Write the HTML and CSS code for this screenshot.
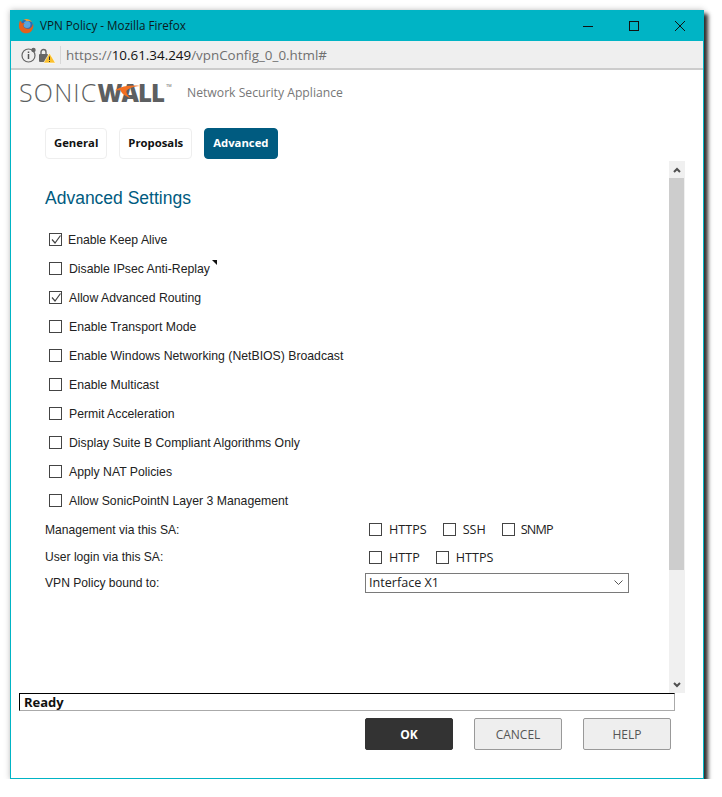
FILE: index.html
```html
<!DOCTYPE html>
<html lang="en">
<head>
    <meta charset="UTF-8">
    <title>VPN Policy - Mozilla Firefox</title>
    <link rel="stylesheet" href="styles.css">
</head>
<body>

<div class="window">

    <!-- Title bar -->
    <div class="titlebar">
        <svg class="ff-icon" width="16" height="16" viewBox="0 0 16 16">
            <circle cx="8.500" cy="7.500" r="6.300" fill="#2b6cb3"/>
            <circle cx="9" cy="6.500" r="3.500" fill="#5aa5dc"/>
            <path d="M2 2.500 C0.500 6 0.400 10.500 3 13.200 C5.500 15.900 10.500 16 13.300 13.200 C15.300 11.200 15.900 8 15 5.500 C14.700 7.800 13.600 9.600 11.800 10.400 C9.500 11.400 6.500 10.600 5.600 8.600 C5 7.200 5.600 5.800 6.800 5.200 C5.600 4.800 4.600 5.200 4 5.600 C3.800 4.400 3 3.300 2 2.500 Z" fill="#e2611d"/>
            <path d="M5.500 1.600 C8.500 0.200 12.300 1.300 14 4.200 C12.300 2.900 10 2.600 8.600 3.200 C7.800 2.400 6.500 1.800 5.500 1.600 Z" fill="#f3a02c"/>
        </svg>
        <span class="title-text">VPN Policy - Mozilla Firefox</span>
        <div class="win-controls">
            <svg width="12" height="12" viewBox="0 0 12 12"><path d="M1 6.500 H11" stroke="#111" fill="none"/></svg>
            <svg width="12" height="12" viewBox="0 0 12 12"><rect x="1.500" y="1.500" width="9" height="9" stroke="#111" fill="none"/></svg>
            <svg width="12" height="12" viewBox="0 0 12 12"><path d="M1 1 L11 11 M11 1 L1 11" stroke="#111" fill="none"/></svg>
        </div>
    </div>

    <!-- Address bar -->
    <div class="urlbar">
        <svg class="url-icons" width="35" height="18" viewBox="0 0 35 18">
            <circle cx="7.500" cy="9.500" r="6.500" stroke="#666" stroke-width="1.200" fill="none"/>
            <path d="M7.500 8 V13 M7.500 5.500 V7" stroke="#555" stroke-width="1.500"/>
            <circle cx="12.500" cy="4" r="2.200" fill="#666"/>
            <rect x="18" y="8" width="9" height="8" rx="1" fill="#666"/>
            <path d="M20 8 V6 A2.500 2.500 0 0 1 25 6 V8" stroke="#666" stroke-width="1.400" fill="none"/>
            <path d="M28.500 7 L34.500 17 H22.500 Z" fill="#fbc02d" stroke="#fff" stroke-width="0.600"/>
            <path d="M28.500 10.500 V14 M28.500 15 V16" stroke="#333" stroke-width="1"/>
        </svg>
        <span class="url-sep"></span>
        <span class="url">https://<span class="url-host">10.61.34.249</span>/vpnConfig_0_0.html#</span>
    </div>

    <!-- Product header -->
    <div class="brand">
        <div class="logo">
            <span class="logo-thin">SONIC</span><span class="logo-bold">WALL</span><span class="logo-tm">TM</span>
            <svg class="logo-swoosh" width="25" height="14" viewBox="0 0 22 16" preserveAspectRatio="none">
                <path d="M0 6 C6 1 14 0 22 1 C15 2 11 4 10 7 C10 10 12 13 14 15 C9 13 5 9 5 6 C3.500 6 2 6 0 6 Z" fill="#f36f21"/>
            </svg>
        </div>
        <span class="brand-text">Network Security Appliance</span>
    </div>

    <!-- Tabs -->
    <div class="tabs">
        <div class="tab">General</div>
        <div class="tab">Proposals</div>
        <div class="tab active">Advanced</div>
    </div>

    <div class="pane">
        <div class="settings">
            <h2>Advanced Settings</h2>

            <label class="check-row tight"><input type="checkbox" checked><span>Enable Keep Alive</span></label>
            <label class="check-row"><input type="checkbox"><span class="has-note">Disable IPsec Anti-Replay</span></label>
            <label class="check-row"><input type="checkbox" checked><span>Allow Advanced Routing</span></label>
            <label class="check-row"><input type="checkbox"><span>Enable Transport Mode</span></label>
            <label class="check-row"><input type="checkbox"><span>Enable Windows Networking (NetBIOS) Broadcast</span></label>
            <label class="check-row"><input type="checkbox"><span>Enable Multicast</span></label>
            <label class="check-row"><input type="checkbox"><span>Permit Acceleration</span></label>
            <label class="check-row"><input type="checkbox"><span>Display Suite B Compliant Algorithms Only</span></label>
            <label class="check-row"><input type="checkbox"><span>Apply NAT Policies</span></label>
            <label class="check-row"><input type="checkbox"><span>Allow SonicPointN Layer 3 Management</span></label>

            <div class="field-row">
                <span class="field-label">Management via this SA:</span>
                <div class="field-opts">
                    <label class="opt"><input type="checkbox"><span>HTTPS</span></label>
                    <label class="opt"><input type="checkbox"><span>SSH</span></label>
                    <label class="opt"><input type="checkbox"><span class="narrow">SNMP</span></label>
                </div>
            </div>
            <div class="field-row login-row">
                <span class="field-label">User login via this SA:</span>
                <div class="field-opts">
                    <label class="opt"><input type="checkbox"><span>HTTP</span></label>
                    <label class="opt"><input type="checkbox"><span>HTTPS</span></label>
                </div>
            </div>
            <div class="field-row bound-row">
                <span class="field-label">VPN Policy bound to:</span>
                <div class="select-box">
                    <span>Interface X1</span>
                    <svg width="9" height="5" viewBox="0 0 9 5"><path d="M0.500 0.500 L4.500 4.500 L8.500 0.500" stroke="#555" fill="none"/></svg>
                </div>
            </div>
        </div>

        <!-- Scrollbar -->
        <div class="scrollbar">
            <div class="scroll-btn">
                <svg width="8" height="6" viewBox="0 0 8 6"><path d="M1 5 L4 2 L7 5" stroke="#505050" stroke-width="2" fill="none"/></svg>
            </div>
            <div class="scroll-track"><div class="scroll-thumb"></div></div>
            <div class="scroll-btn">
                <svg width="8" height="6" viewBox="0 0 8 6"><path d="M1 1 L4 4 L7 1" stroke="#505050" stroke-width="2" fill="none"/></svg>
            </div>
        </div>
    </div>

    <!-- Status -->
    <div class="status"><span>Ready</span></div>

    <!-- Buttons -->
    <div class="actions">
        <button class="btn primary">OK</button>
        <button class="btn">CANCEL</button>
        <button class="btn">HELP</button>
    </div>
</div>

</body>
</html>
```

FILE: styles.css
```css
body {
    margin: 0;
    background: #fff;
    font-family: "Liberation Sans", Arial, sans-serif;
}
.window {
    width: 694px;
    height: 769px;
    margin: 10px 0 0 10px;
    box-sizing: border-box;
    border: 1px solid #00b4c5;
    border-top: none;
    background: #fff;
    display: flex;
    flex-direction: column;
    box-shadow: 4px 4px 4px rgba(0, 0, 0, 0.8), 0 0 6px rgba(0, 0, 0, 0.25);
}

/* title bar */
.titlebar {
    height: 31px;
    background: #00b4c5;
    display: flex;
    align-items: center;
    padding-left: 8px;
    margin: 0 -1px 0 -1px;
    flex: none;
}
.ff-icon {
    margin-right: 6px;
}
.title-text {
    margin-bottom: 2px;
    font-family: "Open Sans", sans-serif;
    font-size: 11.700px;
    color: #0b1a1c;
}
.win-controls {
    margin-left: auto;
    display: flex;
    gap: 34px;
    padding-right: 18px;
}

/* address bar */
.urlbar {
    height: 29px;
    flex: none;
    box-sizing: border-box;
    background: #efefef;
    border-bottom: 2px solid #ccc;
    display: flex;
    align-items: center;
    padding-left: 10px;
}
.url-icons {
    flex: none;
}
.url-sep {
    width: 1px;
    height: 18px;
    background: #d8d8d8;
    margin: 0 5px 0 4px;
}
.url {
    font-family: "Open Sans", sans-serif;
    font-size: 13.400px;
    color: #6f6f6f;
}
.url-host {
    color: #111;
}

/* logo row */
.brand {
    height: 44px;
    flex: none;
    display: flex;
    align-items: center;
    padding-left: 8px;
    box-sizing: border-box;
}
.logo {
    position: relative;
    width: 152px;
    margin-bottom: 6px;
    white-space: nowrap;
    color: #5d5f61;
    font-size: 25px;
    line-height: 30px;
}
.logo-thin {
    font-family: "Open Sans", sans-serif;
    font-weight: 300;
    letter-spacing: 1.200px;
}
.logo-bold {
    font-family: "Open Sans", sans-serif;
    font-weight: 800;
    font-size: 24px;
    letter-spacing: -1px;
}
.logo-tm {
    font-size: 4px;
    vertical-align: 15px;
    margin-left: 2px;
}
.logo-swoosh {
    position: absolute;
    left: 96px;
    top: 14px;
}
.brand-text {
    margin-left: 16px;
    font-family: "Open Sans", sans-serif;
    font-size: 12.200px;
    color: #777;
}

/* tabs */
.tabs {
    display: flex;
    gap: 12px;
    padding-left: 34px;
    margin-top: 14px;
    flex: none;
}
.tab {
    height: 31px;
    box-sizing: border-box;
    padding: 0 8px;
    border: 1px solid #eee;
    border-radius: 4px;
    font-family: "Open Sans", sans-serif;
    font-weight: 700;
    font-size: 11.300px;
    line-height: 28px;
    color: #111;
}
.tab.active {
    padding-right: 9px;
    background: #005b80;
    border-color: #005b80;
    color: #fff;
}

/* scrolling area */
.pane {
    display: flex;
    height: 532px;
    margin-top: 2px;
    flex: none;
}
.settings {
    width: 658px;
    box-sizing: border-box;
    padding-left: 34px;
}
h2 {
    margin: 0;
    padding-top: 26px;
    height: 64px;
    box-sizing: border-box;
    font-size: 17.500px;
    font-weight: normal;
    line-height: 22px;
    color: #005b80;
}
.check-row {
    display: flex;
    align-items: center;
    height: 29px;
    padding-left: 4px;
    font-size: 12.260px;
    color: #222;
}
.check-row.tight span {
    margin-left: -1px;
}
input[type="checkbox"] {
    appearance: none;
    width: 13px;
    height: 13px;
    margin: 0 7px 0 0;
    flex: none;
    border: 1px solid #444;
    background: #fff;
}
input[type="checkbox"]:checked {
    background: url("data:image/svg+xml,%3Csvg xmlns='http://www.w3.org/2000/svg' width='11' height='11'%3E%3Cpath d='M2 5.500 L5 9 L10.500 1.500' stroke='%23444' stroke-width='1.200' fill='none'/%3E%3C/svg%3E") no-repeat center;
}
.has-note {
    position: relative;
}
.has-note::after {
    content: "";
    position: absolute;
    right: -7px;
    top: -2px;
    border-top: 5px solid #111;
    border-left: 5px solid transparent;
}
.field-row {
    display: flex;
    align-items: center;
    height: 29px;
    font-size: 12.100px;
    color: #222;
}
.login-row {
    height: 26px;
}
.bound-row {
    height: 25px;
}
.field-label {
    width: 320px;
    flex: none;
}
.field-opts {
    display: flex;
    gap: 16px;
    padding-left: 4px;
}
.opt {
    display: flex;
    align-items: center;
    font-family: "Open Sans", sans-serif;
    font-size: 12.600px;
}
.narrow {
    margin-left: -1px;
    letter-spacing: -0.800px;
}
.select-box {
    width: 264px;
    height: 20px;
    box-sizing: border-box;
    border: 1px solid #7a7a7a;
    padding: 0 5px 0 3px;
    display: flex;
    align-items: center;
    justify-content: space-between;
    font-family: "Open Sans", sans-serif;
    font-size: 12.600px;
}

/* scrollbar */
.scrollbar {
    width: 16px;
    display: flex;
    flex-direction: column;
    background: #f0f0f0;
}
.scroll-btn {
    height: 17px;
    flex: none;
    display: flex;
    align-items: center;
    justify-content: center;
}
.scroll-track {
    flex: 1;
}
.scroll-thumb {
    height: 392px;
    width: 15px;
    background: #cdcdcd;
}

/* status */
.status {
    margin-left: 8px;
    width: 656px;
    height: 18px;
    flex: none;
    box-sizing: border-box;
    border-top: 1px solid #000;
    border-left: 1px solid #000;
    border-right: 1px solid #aaa;
    border-bottom: 1px solid #aaa;
    padding-left: 4px;
    overflow: hidden;
    font-family: "Open Sans", sans-serif;
    font-weight: 700;
    font-size: 13px;
    line-height: 17px;
    color: #111;
}

/* buttons */
.actions {
    display: flex;
    gap: 21px;
    padding-left: 354px;
    margin-top: 7px;
}
.btn {
    width: 88px;
    height: 32px;
    box-sizing: border-box;
    border: 1px solid #999;
    border-radius: 2px;
    background: #eee;
    color: #555;
    font-family: "Open Sans", sans-serif;
    font-size: 12px;
}
.btn.primary {
    background: #333;
    border-color: #333;
    color: #fff;
    font-weight: 700;
}
```
